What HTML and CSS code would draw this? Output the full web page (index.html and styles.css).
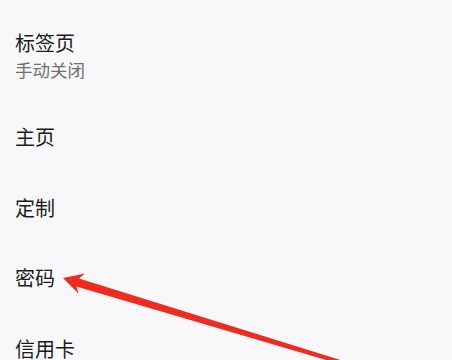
FILE: index.html
```html
<!DOCTYPE html>
<html lang="zh-CN">
<head>
<meta charset="utf-8">
<link rel="stylesheet" href="styles.css">
</head>
<body>
<div class="page">
  <ul class="menu">
    <li class="item item-first">
      <div class="title">标签页</div>
      <div class="sub">手动关闭</div>
    </li>
    <li class="item"><div class="title">主页</div></li>
    <li class="item"><div class="title">定制</div></li>
    <li class="item"><div class="title">密码</div></li>
    <li class="item"><div class="title">信用卡</div></li>
  </ul>
  <svg class="arrow" width="452" height="360" viewBox="0 0 452 360">
    <polygon fill="#ef2a1f" points="63,278 85,273.5 79,278.6 341,360.2 339.8,364 76.4,286.4 78.5,293.5"/>
  </svg>
</div>
</body>
</html>
```
FILE: styles.css
```css
html, body {
  margin: 0;
  padding: 0;
  background: #f8f8fa;
}
body {
  font-family: "Noto Sans CJK SC", "Noto Sans", sans-serif;
  overflow: hidden;
}
.page {
  position: relative;
  width: 452px;
  height: 360px;
  overflow: hidden;
}
.menu {
  list-style: none;
  margin: 0;
  padding: 0 15px;
}
.item {
  padding: 21.25px 0;
}
.item-first {
  padding: 29px 0 21px;
}
.title {
  font-size: 20px;
  line-height: 28px;
  color: #1c1c1c;
}
.sub {
  margin-top: 1px;
  font-size: 17.5px;
  line-height: 23px;
  color: #6f6f6f;
}
.arrow {
  position: absolute;
  left: 0;
  top: 0;
}
```
